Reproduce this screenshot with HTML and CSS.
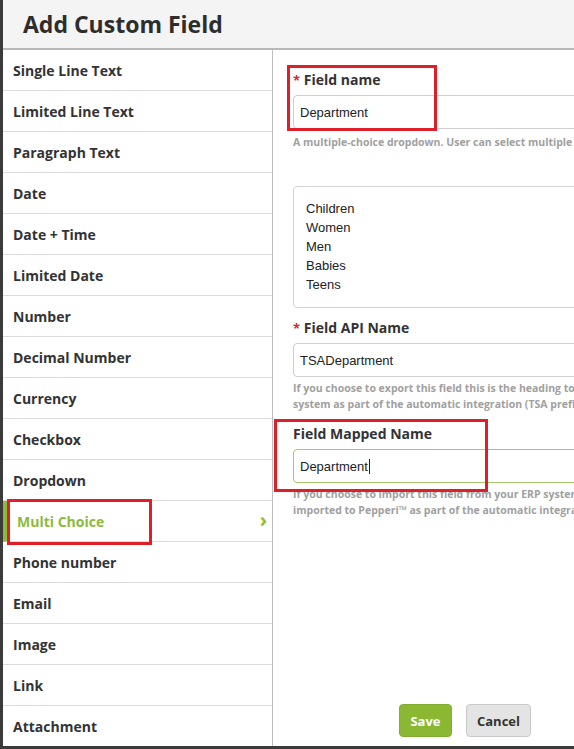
FILE: index.html
```html
<!DOCTYPE html>
<html>
<head>
<meta charset="utf-8">
<link rel="stylesheet" href="styles.css">
</head>
<body>
<div class="frame">
  <header class="head"><h1>Add Custom Field</h1></header>
  <div class="main">
    <ul class="types">
      <li>Single Line Text</li>
      <li>Limited Line Text</li>
      <li>Paragraph Text</li>
      <li>Date</li>
      <li>Date + Time</li>
      <li>Limited Date</li>
      <li>Number</li>
      <li>Decimal Number</li>
      <li>Currency</li>
      <li>Checkbox</li>
      <li>Dropdown</li>
      <li class="active">Multi Choice<span class="chev">&#8250;</span></li>
      <li>Phone number</li>
      <li>Email</li>
      <li>Image</li>
      <li>Link</li>
      <li>Attachment</li>
    </ul>
    <section class="form">
      <label class="lbl first"><span class="req">*</span> Field name</label>
      <div class="input">Department</div>
      <p class="help"><span>A multiple-choice dropdown. User can select multiple</span></p>
      <div class="options">
        <div>Children</div>
        <div>Women</div>
        <div>Men</div>
        <div>Babies</div>
        <div>Teens</div>
      </div>
      <label class="lbl api"><span class="req">*</span> Field API Name</label>
      <div class="input">TSADepartment</div>
      <p class="help"><span>If you choose to export this field this is the heading to</span><span>system as part of the automatic integration (TSA prefix</span></p>
      <label class="lbl mapped">Field Mapped Name</label>
      <div class="input focus">Department<span class="caret"></span></div>
      <p class="help"><span>If you choose to import this field from your ERP system</span><span>imported to Pepperi&trade; as part of the automatic integration</span></p>
      <div class="actions">
        <button class="btn save">Save</button>
        <button class="btn cancel">Cancel</button>
      </div>
    </section>
  </div>
  <div class="mark m1"></div>
  <div class="mark m2"></div>
  <div class="mark m3"></div>
</div>
</body>
</html>
```
FILE: styles.css
```css
html, body {
  margin: 0;
  padding: 0;
  background: #fff;
}
.frame {
  position: relative;
  width: 571px;
  height: 746px;
  border-left: 3px solid #3b3b3b;
  border-bottom: 3px solid #3b3b3b;
  display: flex;
  flex-direction: column;
  overflow: hidden;
  font-family: "Open Sans", "Liberation Sans", sans-serif;
  color: #333;
}
.head {
  height: 48px;
  flex: none;
  background: #f4f4f4;
  border-bottom: 2px solid #b9b9b9;
  display: flex;
  align-items: center;
  padding-left: 20px;
}
.head h1 {
  margin: 0;
  font-size: 23px;
  font-weight: 700;
  color: #2d2d2d;
}
.main {
  flex: 1;
  display: flex;
  min-height: 0;
}
.types {
  list-style: none;
  margin: 0;
  padding: 0;
  width: 269px;
  flex: none;
  border-right: 1px solid #bdbdbd;
}
.types li {
  height: 40px;
  border-bottom: 1px solid #dcdcdc;
  display: flex;
  align-items: center;
  padding-left: 10px;
  font-size: 14px;
  font-weight: 700;
  color: #333;
}
.types li:last-child {
  border-bottom: none;
}
.types li.active {
  color: #8cbb3c;
  border-left: 5px solid #8cbb3c;
  padding-left: 9px;
  justify-content: space-between;
  padding-right: 5px;
}
.chev {
  font-size: 20px;
  font-weight: 700;
  color: #8cbb3c;
  line-height: 20px;
  padding-bottom: 3px;
}
.form {
  flex: 1;
  min-width: 0;
  display: flex;
  flex-direction: column;
  padding: 20px 0 9px 20px;
  overflow: hidden;
}
.lbl {
  display: block;
  font-size: 14px;
  line-height: 20px;
  font-weight: 700;
  color: #333;
  white-space: nowrap;
}
.req {
  color: #d9262c;
  font-size: 13px;
}
.input {
  margin-top: 5px;
  width: 320px;
  height: 32px;
  border: 1px solid #cfcfcf;
  border-radius: 4px;
  display: flex;
  align-items: center;
  padding-left: 6px;
  font-family: "Liberation Sans", Arial, sans-serif;
  font-size: 13px;
  color: #222;
  flex: none;
}
.input.focus {
  border-color: #a5c96a;
}
.caret {
  display: inline-block;
  width: 1px;
  height: 15px;
  background: #222;
  margin-left: 1px;
}
.help {
  margin: 5px 0 0;
  font-size: 10.5px;
  line-height: 16px;
  font-weight: 700;
  color: #a0a0a0;
  white-space: nowrap;
}
.help span {
  display: block;
}
.options {
  margin-top: 36px;
  width: 314px;
  height: 108px;
  border: 1px solid #d4d4d4;
  border-radius: 4px;
  padding: 12px 0 0 12px;
  font-family: "Liberation Sans", Arial, sans-serif;
  font-size: 13px;
  line-height: 19px;
  color: #222;
  flex: none;
}
.lbl.api {
  margin-top: 10px;
}
.input + .help {
  margin-top: 3px;
}
.lbl.first + .input + .help {
  margin-top: 5px;
}
.lbl.mapped {
  margin-top: 12px;
}
.actions {
  margin-top: auto;
  display: flex;
  gap: 14px;
  padding-left: 106px;
}
.btn {
  height: 33px;
  border-radius: 4px;
  font-family: "Open Sans", "Liberation Sans", sans-serif;
  font-size: 13px;
  font-weight: 700;
  padding: 0;
  cursor: pointer;
}
.save {
  width: 53px;
  background: #8ab833;
  border: 1px solid #82ad30;
  color: #fff;
}
.cancel {
  width: 65px;
  background: #e4e4e4;
  border: 1px solid #c9c9c9;
  color: #333;
}
.mark {
  position: absolute;
  border: 3px solid #dc1f29;
  box-sizing: border-box;
}
.m1 { left: 284px; top: 65px; width: 150px; height: 66px; }
.m2 { left: 4px; top: 499px; width: 145px; height: 46px; }
.m3 { left: 271px; top: 419px; width: 214px; height: 73px; }
```
